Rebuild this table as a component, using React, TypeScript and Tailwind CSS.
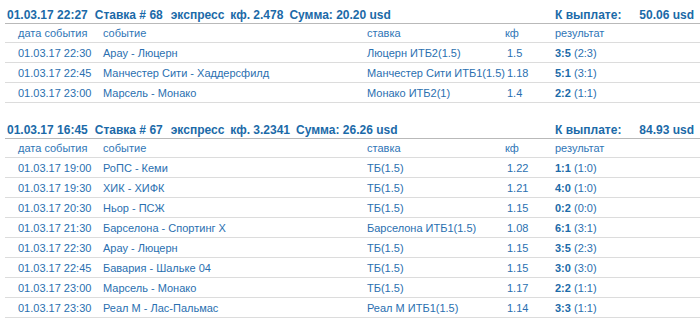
import React from "react";

type Row = { date: string; event: string; stake: string; k: string; score: string; half: string };
type Bet = { date: string; num: string; kf: string; sum: string; pay: string; rows: Row[] };

const bets: Bet[] = [
  {
    date: "01.03.17 22:27",
    num: "68",
    kf: "2.478",
    sum: "20.20",
    pay: "50.06",
    rows: [
      { date: "01.03.17 22:30", event: "Арау - Люцерн", stake: "Люцерн ИТБ2(1.5)", k: "1.5", score: "3:5", half: "(2:3)" },
      { date: "01.03.17 22:45", event: "Манчестер Сити - Хаддерсфилд", stake: "Манчестер Сити ИТБ1(1.5)", k: "1.18", score: "5:1", half: "(3:1)" },
      { date: "01.03.17 23:00", event: "Марсель - Монако", stake: "Монако ИТБ2(1)", k: "1.4", score: "2:2", half: "(1:1)" },
    ],
  },
  {
    date: "01.03.17 16:45",
    num: "67",
    kf: "3.2341",
    sum: "26.26",
    pay: "84.93",
    rows: [
      { date: "01.03.17 19:00", event: "РоПС - Кеми", stake: "ТБ(1.5)", k: "1.22", score: "1:1", half: "(1:0)" },
      { date: "01.03.17 19:30", event: "ХИК - ХИФК", stake: "ТБ(1.5)", k: "1.21", score: "4:0", half: "(1:0)" },
      { date: "01.03.17 20:30", event: "Ньор - ПСЖ", stake: "ТБ(1.5)", k: "1.15", score: "0:2", half: "(0:0)" },
      { date: "01.03.17 21:30", event: "Барселона - Спортинг Х", stake: "Барселона ИТБ1(1.5)", k: "1.08", score: "6:1", half: "(3:1)" },
      { date: "01.03.17 22:30", event: "Арау - Люцерн", stake: "ТБ(1.5)", k: "1.15", score: "3:5", half: "(2:3)" },
      { date: "01.03.17 22:45", event: "Бавария - Шальке 04", stake: "ТБ(1.5)", k: "1.15", score: "3:0", half: "(3:0)" },
      { date: "01.03.17 23:00", event: "Марсель - Монако", stake: "ТБ(1.5)", k: "1.17", score: "2:2", half: "(1:1)" },
      { date: "01.03.17 23:30", event: "Реал М - Лас-Пальмас", stake: "Реал М ИТБ1(1.5)", k: "1.14", score: "3:3", half: "(1:1)" },
    ],
  },
];

const grid = "grid grid-cols-[98px_264px_138px_50px_1fr] items-center";

function BetBlock({ bet, first }: { bet: Bet; first: boolean }) {
  return (
    <div className={first ? "" : "mt-[12px]"}>
      <div className="flex items-end pt-[7px] h-[24px] border-b border-[#b9b9b9] font-bold text-[12px] leading-[16px] text-[#1b6aa8]">
        <div className="w-[550px] pl-[2px] flex whitespace-pre">
          <span>{bet.date}</span>
          <span className="ml-[7px]">Ставка # {bet.num}</span>
          <span className="ml-[8px]">экспресс</span>
          <span className="ml-[6px]">кф. {bet.kf}</span>
          <span className="ml-[6px]">Сумма: {bet.sum} usd</span>
        </div>
        <div className="w-[81px]">К выплате:</div>
        <div className="w-[58px] text-right">{bet.pay} usd</div>
      </div>
      <div className={`${grid} h-[19px] border-b border-[#dcdcdc] text-[#2f76b6]`}>
        <div className="pl-[13px]">дата события</div>
        <div>событие</div>
        <div>ставка</div>
        <div>кф</div>
        <div>результат</div>
      </div>
      {bet.rows.map((r, i) => (
        <div key={i} className={`${grid} h-[20px] border-b border-[#dcdcdc] text-[#2a6fb0]`}>
          <div className="pl-[13px] whitespace-nowrap">{r.date}</div>
          <div className="whitespace-nowrap">{r.event}</div>
          <div className="whitespace-nowrap">{r.stake}</div>
          <div className="pl-[2px]">{r.k}</div>
          <div className="whitespace-nowrap">
            <span className="font-bold text-[#1b6aa8]">{r.score}</span> {r.half}
          </div>
        </div>
      ))}
    </div>
  );
}

export default function App() {
  return (
    <div
      className="w-[700px] h-[331px] bg-white pl-[5px] text-[11px] leading-[14px] overflow-hidden"
      style={{ fontFamily: '"Liberation Sans", Arial, sans-serif' }}
    >
      {bets.map((b, i) => (
        <BetBlock key={i} bet={b} first={i === 0} />
      ))}
    </div>
  );
}
